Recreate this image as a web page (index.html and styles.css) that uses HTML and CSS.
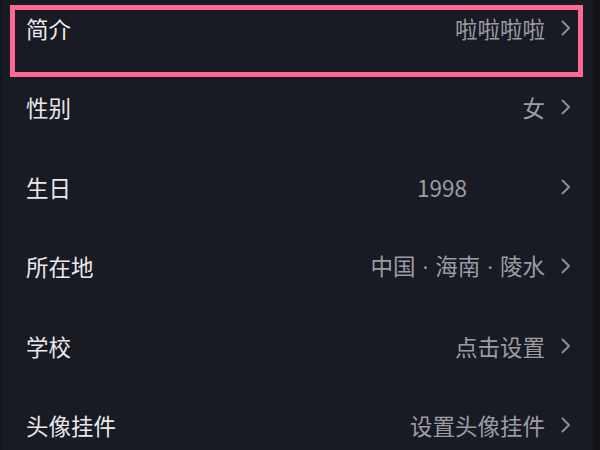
FILE: index.html
```html
<!DOCTYPE html>
<html lang="zh-CN">
<head>
<meta charset="utf-8">
<link rel="stylesheet" href="styles.css">
</head>
<body>
<div class="page">
  <ul class="list">
    <li class="row">
      <span class="label">简介</span>
      <span class="value">啦啦啦啦</span>
      <svg class="chev" viewBox="0 0 10 16"><path d="M1.5 1.5 L8 8 L1.5 14.5"/></svg>
      <div class="highlight"></div>
    </li>
    <li class="row">
      <span class="label">性别</span>
      <span class="value">女</span>
      <svg class="chev" viewBox="0 0 10 16"><path d="M1.5 1.5 L8 8 L1.5 14.5"/></svg>
    </li>
    <li class="row">
      <span class="label">生日</span>
      <span class="value value-center">1998</span>
      <svg class="chev" viewBox="0 0 10 16"><path d="M1.5 1.5 L8 8 L1.5 14.5"/></svg>
    </li>
    <li class="row">
      <span class="label">所在地</span>
      <span class="value">中国<span class="sep"> · </span>海南<span class="sep"> · </span>陵水</span>
      <svg class="chev" viewBox="0 0 10 16"><path d="M1.5 1.5 L8 8 L1.5 14.5"/></svg>
    </li>
    <li class="row">
      <span class="label">学校</span>
      <span class="value">点击设置</span>
      <svg class="chev" viewBox="0 0 10 16"><path d="M1.5 1.5 L8 8 L1.5 14.5"/></svg>
    </li>
    <li class="row">
      <span class="label">头像挂件</span>
      <span class="value">设置头像挂件</span>
      <svg class="chev" viewBox="0 0 10 16"><path d="M1.5 1.5 L8 8 L1.5 14.5"/></svg>
    </li>
  </ul>
  <div class="rail"></div>
</div>
</body>
</html>
```
FILE: styles.css
```css
html, body {
  margin: 0;
  padding: 0;
  background: #181b23;
}
body {
  width: 600px;
  height: 450px;
  overflow: hidden;
  font-family: "Noto Sans CJK SC", "Noto Sans", sans-serif;
}
.page {
  display: flex;
  height: 450px;
  overflow: hidden;
  border-left: 3px solid #14161d;
  box-sizing: border-box;
}
.list {
  flex: 1;
  list-style: none;
  margin: 0;
  padding: 0;
}
.rail {
  width: 7px;
  background: #121419;
}
.row {
  position: relative;
  display: flex;
  align-items: center;
  height: 79.5px;
  box-sizing: border-box;
  padding: 0 22px 24px 23px;
}
.label {
  flex: 1;
  color: #e9e9ec;
  font-size: 22.5px;
  line-height: 30px;
}
.value {
  color: #9c9da3;
  font-size: 22.5px;
  line-height: 30px;
  margin-right: 16px;
}
.sep {
  font-family: "Noto Sans", sans-serif;
  font-size: 20px;
  margin: 0 2px;
}
.value-center {
  margin-right: 94px;
}
.chev {
  width: 10px;
  height: 16px;
  fill: none;
  stroke: #8d8e94;
  stroke-width: 2;
  stroke-linecap: round;
  stroke-linejoin: round;
}
.highlight {
  position: absolute;
  left: 7px;
  top: 5px;
  width: 573px;
  height: 72px;
  box-sizing: border-box;
  border: 5px solid #fd6a8f;
}
```
